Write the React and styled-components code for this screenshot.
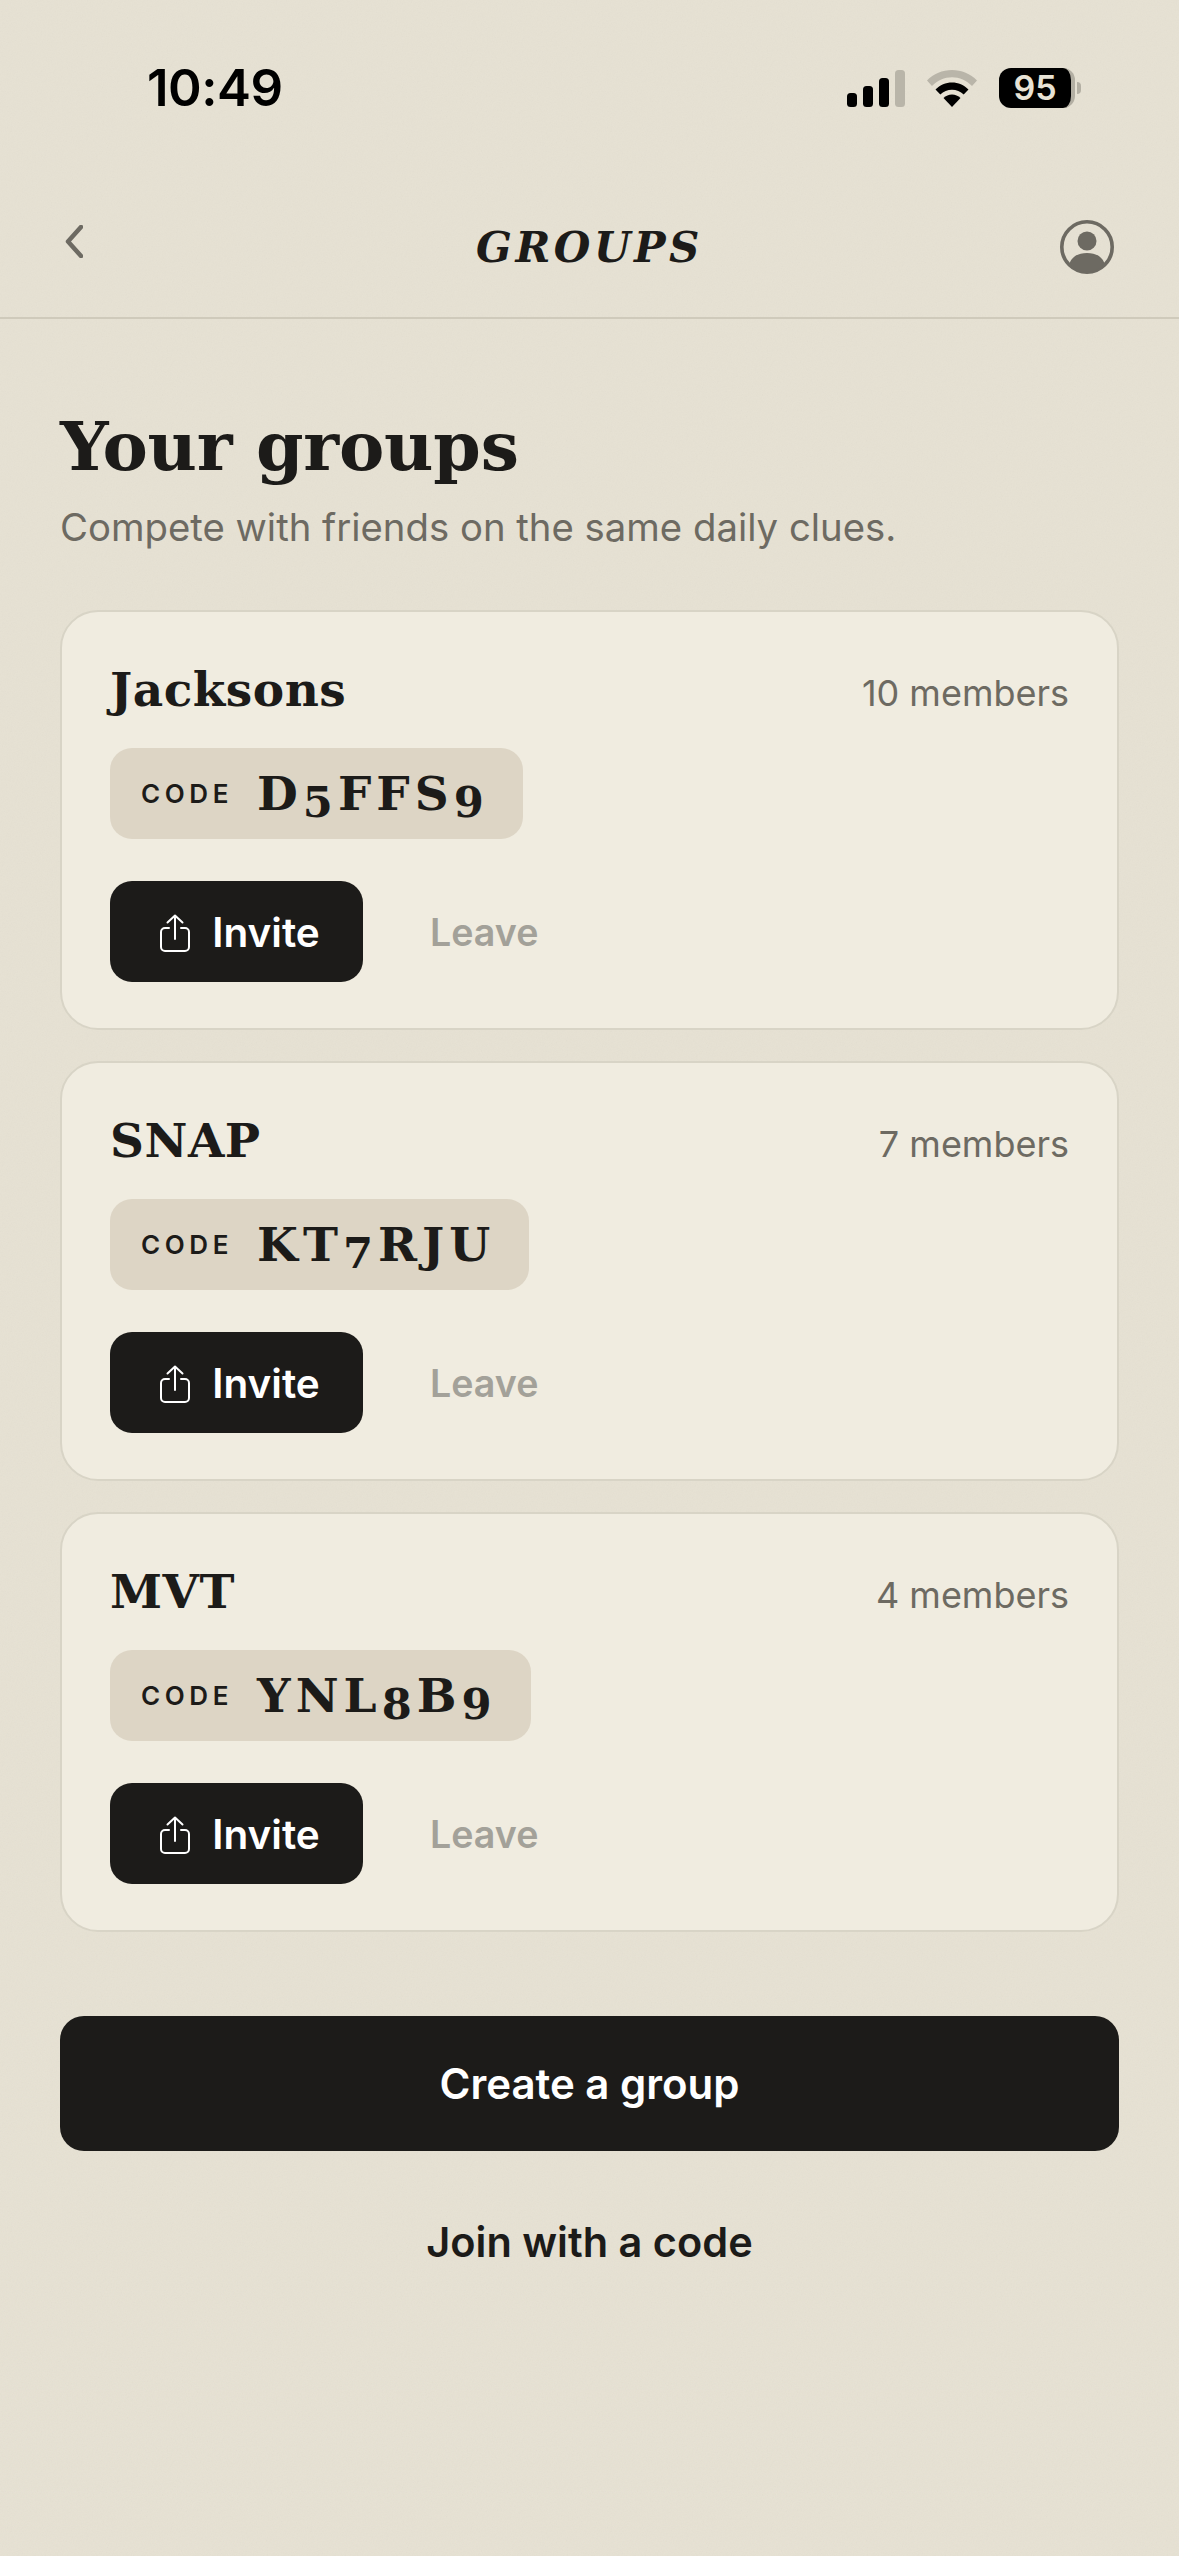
import styled, { createGlobalStyle } from 'styled-components';

const GlobalStyle = createGlobalStyle`
  html, body {
    margin: 0;
    padding: 0;
    background: #e5e0d2;
  }
  * {
    box-sizing: border-box;
  }
`;

const noise = `url("data:image/svg+xml,%3Csvg xmlns='http://www.w3.org/2000/svg' width='300' height='300'%3E%3Cfilter id='n'%3E%3CfeTurbulence type='fractalNoise' baseFrequency='0.8' numOctaves='3' stitchTiles='stitch'/%3E%3CfeColorMatrix type='saturate' values='0'/%3E%3C/filter%3E%3Crect width='300' height='300' filter='url(%23n)' opacity='0.05'/%3E%3C/svg%3E")`;

const groups = [
  { name: 'Jacksons', members: '10 members', code: 'D5FFS9' },
  { name: 'SNAP', members: '7 members', code: 'KT7RJU' },
  { name: 'MVT', members: '4 members', code: 'YNL8B9' },
];

function CodeText({ code }) {
  return code.split('').map((c, i) =>
    /\d/.test(c) ? <Digit key={i}>{c}</Digit> : <span key={i}>{c}</span>
  );
}

function ShareIcon() {
  return (
    <svg width="30" height="38" viewBox="0 0 30 38" fill="none" stroke="#fff" strokeWidth="2" strokeLinecap="round" strokeLinejoin="round">
      <path d="M9 14H5a4 4 0 0 0-4 4v15a4 4 0 0 0 4 4h20a4 4 0 0 0 4-4V18a4 4 0 0 0-4-4h-4" />
      <path d="M15 25V1.500M7.500 8.500 15 1.500l7.500 7" />
    </svg>
  );
}

export default function App() {
  return (
    <Page>
      <GlobalStyle />
      <StatusBar>
        <Time>10:49</Time>
        <StatusIcons>
          <svg width="58" height="37" viewBox="0 0 58 37">
            <rect x="0" y="23" width="10" height="14" rx="3.5" fill="#000" />
            <rect x="16" y="16" width="10" height="21" rx="3.5" fill="#000" />
            <rect x="32" y="8" width="10" height="29" rx="3.5" fill="#000" />
            <rect x="48" y="0" width="10" height="37" rx="3.5" fill="#b9b5a9" />
          </svg>
          <svg width="50" height="37" viewBox="0 0 50 37">
            <path d="M0 10.5C6.5 3.8 15.5 0 25 0s18.500 3.800 25 10.500l-5 5.500C39.500 10.500 32.500 7.300 25 7.300S10.500 10.500 5 16z" fill="#b9b5a9" />
            <path d="M8.500 19.500C13 15 18.800 12.500 25 12.500s12 2.500 16.500 7l-4.800 5C33.500 21.500 29.400 19.800 25 19.800s-8.500 1.700-11.700 4.700z" fill="#000" />
            <path d="M16.500 28C18.800 25.800 21.800 24.600 25 24.600s6.200 1.200 8.500 3.400L25 37z" fill="#000" />
          </svg>
          <Battery>
            <BatteryBody>95</BatteryBody>
            <BatteryNub />
          </Battery>
        </StatusIcons>
      </StatusBar>

      <NavBar>
        <BackButton>
          <svg width="18" height="33" viewBox="0 0 18 33" fill="none" stroke="#6d6a62" strokeWidth="4.5" strokeLinecap="round" strokeLinejoin="round">
            <path d="M16 2 3 16.500 16 31" />
          </svg>
        </BackButton>
        <NavTitle>GROUPS</NavTitle>
        <ProfileButton>
          <svg width="54" height="54" viewBox="0 0 54 54">
            <circle cx="27" cy="27" r="25.200" fill="none" stroke="#6d6a62" strokeWidth="3.600" />
            <circle cx="27" cy="21" r="9.500" fill="#6d6a62" />
            <path d="M9.500 43.500C12 36 19 33 27 33s15 3 17.500 10.500C40 48.500 34 52 27 52S14 48.500 9.500 43.500z" fill="#6d6a62" />
          </svg>
        </ProfileButton>
      </NavBar>

      <Content>
        <Title>Your groups</Title>
        <Subtitle>Compete with friends on the same daily clues.</Subtitle>

        <CardList>
          {groups.map((g) => (
            <Card key={g.name}>
              <CardHeader>
                <GroupName>{g.name}</GroupName>
                <Members>{g.members}</Members>
              </CardHeader>
              <CodePill>
                <CodeLabel>CODE</CodeLabel>
                <CodeValue><CodeText code={g.code} /></CodeValue>
              </CodePill>
              <Actions>
                <InviteButton>
                  <ShareIcon />
                  Invite
                </InviteButton>
                <LeaveButton>Leave</LeaveButton>
              </Actions>
            </Card>
          ))}
        </CardList>

        <CreateButton>Create a group</CreateButton>
        <JoinButton>Join with a code</JoinButton>
      </Content>
    </Page>
  );
}

const Page = styled.div`
  min-height: 2556px;
  background-color: #e6e1d3;
  background-image: ${noise};
  font-family: Inter, "Liberation Sans", sans-serif;
  color: #1c1b19;
  overflow: hidden;
`;

const StatusBar = styled.div`
  height: 176px;
  padding: 62px 38px 0 147px;
  display: flex;
  justify-content: space-between;
  align-items: flex-start;
`;

const Time = styled.div`
  font-size: 51px;
  line-height: 52px;
  font-weight: 600;
  color: #000;
  letter-spacing: -0.5px;
`;

const StatusIcons = styled.div`
  display: flex;
  align-items: center;
  gap: 22px;
  padding: 6px 60px 0 0;
`;

const Battery = styled.div`
  display: flex;
  align-items: center;
`;

const BatteryBody = styled.div`
  width: 76px;
  height: 40px;
  border-radius: 12px;
  background: #000;
  color: #e8e3d6;
  font-size: 34px;
  font-weight: 600;
  line-height: 40px;
  text-align: center;
  border-right: 4px solid #b3afa3;
`;

const BatteryNub = styled.div`
  width: 4px;
  height: 12px;
  margin-left: 2px;
  background: #b3afa3;
  border-radius: 0 6px 6px 0;
`;

const NavBar = styled.div`
  height: 143px;
  padding: 0 65px 0 65px;
  border-bottom: 2px solid #cfcabb;
  display: flex;
  align-items: flex-start;
  justify-content: space-between;
`;

const BackButton = styled.div`
  padding-top: 49px;
  width: 54px;
`;

const NavTitle = styled.div`
  font-family: "DejaVu Serif", serif;
  font-style: italic;
  font-weight: 700;
  font-size: 42px;
  line-height: 60px;
  letter-spacing: 3.500px;
  margin-top: 42px;
`;

const ProfileButton = styled.div`
  padding-top: 44px;
  width: 54px;
`;

const Content = styled.div`
  padding: 0 60px;
  display: flex;
  flex-direction: column;
`;

const Title = styled.h1`
  margin: 82px 0 0;
  font-family: "DejaVu Serif", serif;
  font-weight: 700;
  font-size: 68px;
  line-height: 90px;
  letter-spacing: -0.2px;
`;

const Subtitle = styled.p`
  margin: 13px 0 0;
  font-size: 38.3px;
  line-height: 46px;
  color: #6d6a62;
`;

const CardList = styled.div`
  margin-top: 60px;
  display: flex;
  flex-direction: column;
  gap: 31px;
`;

const Card = styled.div`
  height: 420px;
  background: #f0ece0;
  border: 2px solid #d8d4c6;
  border-radius: 38px;
  padding: 47px 48px 0;
`;

const CardHeader = styled.div`
  display: flex;
  justify-content: space-between;
  align-items: baseline;
`;

const GroupName = styled.div`
  font-family: "DejaVu Serif", serif;
  font-weight: 700;
  font-size: 47px;
  line-height: 62px;
  letter-spacing: 0.5px;
`;

const Members = styled.div`
  font-size: 36px;
  line-height: 48px;
  color: #6d6a62;
`;

const CodePill = styled.div`
  display: inline-flex;
  align-items: center;
  gap: 24px;
  height: 91px;
  margin-top: 27px;
  padding: 0 34px 0 31px;
  background: #ddd5c5;
  border-radius: 22px;
`;

const CodeLabel = styled.span`
  font-size: 26px;
  font-weight: 600;
  letter-spacing: 4.6px;
`;

const CodeValue = styled.span`
  font-family: "DejaVu Serif", serif;
  font-weight: 700;
  font-size: 47px;
  line-height: 60px;
  letter-spacing: 5px;
`;

const Digit = styled.span`
  font-size: 0.92em;
  vertical-align: -0.16em;
  line-height: 1;
`;

const Actions = styled.div`
  display: flex;
  align-items: center;
  gap: 67px;
  margin-top: 42px;
`;

const InviteButton = styled.div`
  width: 253px;
  height: 101px;
  padding: 2px 0 0 7px;
  background: #1c1b19;
  border-radius: 22px;
  color: #fff;
  font-size: 40.5px;
  font-weight: 600;
  display: flex;
  align-items: center;
  justify-content: center;
  gap: 22px;
`;

const LeaveButton = styled.div`
  padding-top: 2px;
  font-size: 37.600px;
  font-weight: 600;
  color: #a3a199;
`;

const CreateButton = styled.div`
  margin-top: 84px;
  height: 135px;
  background: #1c1b19;
  border-radius: 24px;
  color: #fff;
  font-size: 42px;
  font-weight: 600;
  display: flex;
  align-items: center;
  justify-content: center;
`;

const JoinButton = styled.div`
  margin-top: 66px;
  font-size: 41.500px;
  line-height: 50px;
  font-weight: 600;
  text-align: center;
`;
